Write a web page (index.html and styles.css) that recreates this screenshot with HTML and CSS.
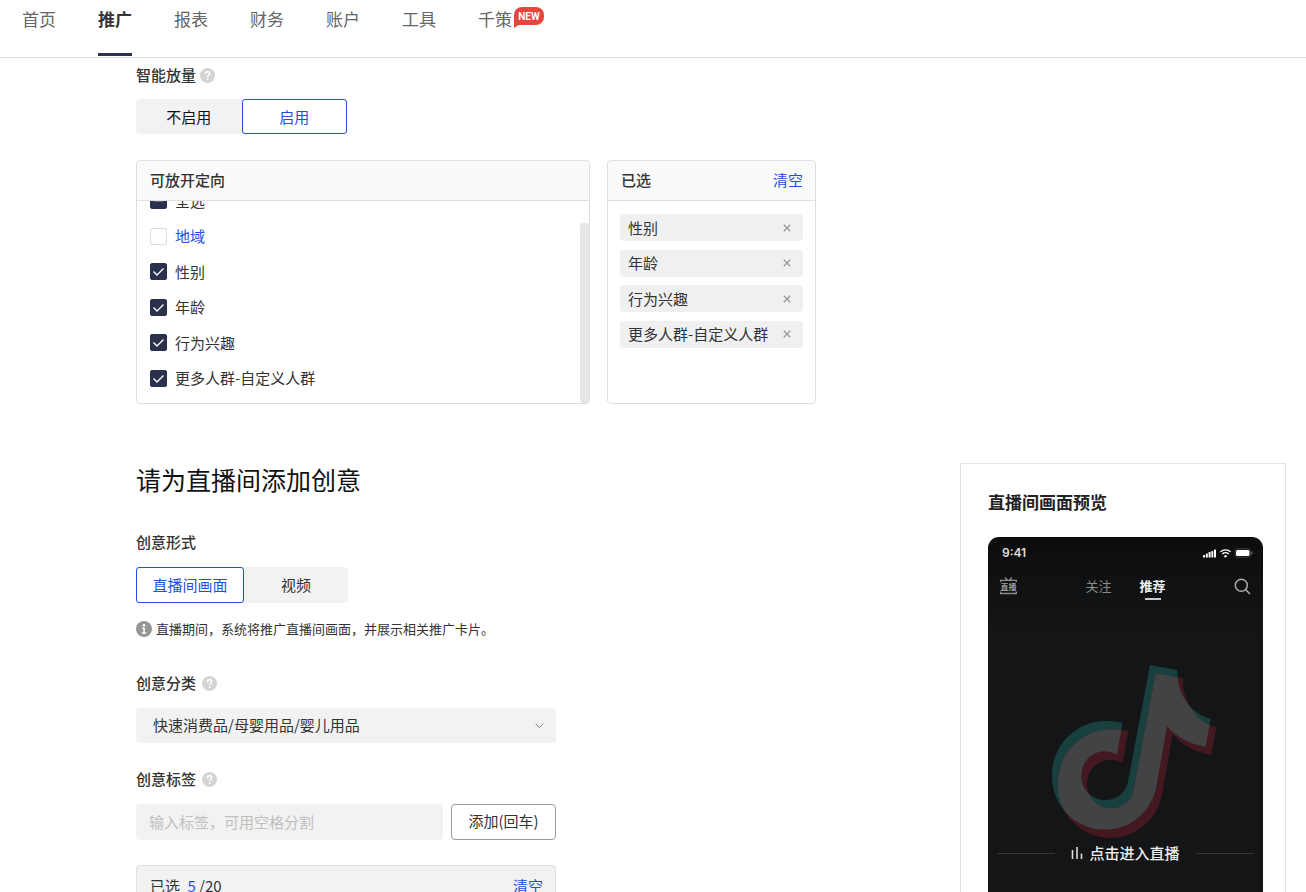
FILE: index.html
```html
<!DOCTYPE html>
<html lang="zh-CN">
<head>
<meta charset="utf-8">
<meta name="viewport" content="width=device-width, initial-scale=1">
<title>推广</title>
<link rel="stylesheet" href="styles.css">
</head>
<body>
<svg class="defs" aria-hidden="true">
  <symbol id="help" viewBox="0 0 15 15"><circle cx="7.500" cy="7.500" r="7.500" fill="#d4d4d4"/><path d="M5.300 5.900C5.300 4.500 6.200 3.700 7.500 3.700S9.700 4.500 9.700 5.700C9.700 7 7.600 7.300 7.600 9" fill="none" stroke="#fff" stroke-width="1.500"/><circle cx="7.600" cy="11" r="1" fill="#fff"/></symbol>
  <symbol id="tick" viewBox="0 0 17 17"><path d="M3.500 8.500l3.500 3.500 6.500-6.500" fill="none" stroke="#fff" stroke-width="1.400"/></symbol>
  <symbol id="close" viewBox="0 0 8 8"><path d="M.8.8l6.400 6.400M7.200.8L.8 7.200" fill="none" stroke="#999" stroke-width="1.300"/></symbol>
</svg>
<header class="topbar">
  <nav class="nav">
    <a href="#">首页</a>
    <a href="#" class="active">推广</a>
    <a href="#">报表</a>
    <a href="#">财务</a>
    <a href="#">账户</a>
    <a href="#">工具</a>
    <a href="#">千策<span class="badge">NEW</span></a>
  </nav>
</header>
<main class="content">
  <section class="targeting">
    <h3 class="label">智能放量 <svg class="help"><use href="#help"/></svg></h3>
    <div class="segment">
      <button type="button" class="seg plain">不启用</button>
      <button type="button" class="seg selected">启用</button>
    </div>
    <div class="panels">
      <div class="panel">
        <div class="panel-head"><b>可放开定向</b></div>
        <div class="options">
          <div class="option-list">
            <label class="option"><span class="check"><input type="checkbox" checked><svg viewBox="0 0 17 17"><path d="M4 8.500h9" stroke="#fff" stroke-width="1.500"/></svg></span>全选</label>
            <label class="option link"><span class="check"><input type="checkbox"></span>地域</label>
            <label class="option"><span class="check"><input type="checkbox" checked><svg><use href="#tick"/></svg></span>性别</label>
            <label class="option"><span class="check"><input type="checkbox" checked><svg><use href="#tick"/></svg></span>年龄</label>
            <label class="option"><span class="check"><input type="checkbox" checked><svg><use href="#tick"/></svg></span>行为兴趣</label>
            <label class="option"><span class="check"><input type="checkbox" checked><svg><use href="#tick"/></svg></span>更多人群-自定义人群</label>
          </div>
          <div class="scroll-thumb"></div>
        </div>
      </div>
      <div class="panel">
        <div class="panel-head narrow"><b>已选</b><button type="button" class="clear">清空</button></div>
        <div class="tags">
          <div class="tag">性别<button type="button" aria-label="移除性别"><svg><use href="#close"/></svg></button></div>
          <div class="tag">年龄<button type="button" aria-label="移除年龄"><svg><use href="#close"/></svg></button></div>
          <div class="tag">行为兴趣<button type="button" aria-label="移除行为兴趣"><svg><use href="#close"/></svg></button></div>
          <div class="tag">更多人群-自定义人群<button type="button" aria-label="移除更多人群"><svg><use href="#close"/></svg></button></div>
        </div>
      </div>
    </div>
  </section>
  <div class="creative">
    <section class="form">
      <h2 class="title">请为直播间添加创意</h2>
      <h3 class="label">创意形式</h3>
      <div class="segment">
        <button type="button" class="seg selected">直播间画面</button>
        <button type="button" class="seg">视频</button>
      </div>
      <p class="note"><svg viewBox="0 0 15 15"><circle cx="7.500" cy="7.500" r="7.500" fill="#969696"/><circle cx="7.500" cy="4" r="1.200" fill="#fff"/><path d="M5.800 6.700h1.800v4.300M5.500 11.200h4" fill="none" stroke="#fff" stroke-width="1.400"/></svg>直播期间，系统将推广直播间画面，并展示相关推广卡片。</p>
      <label class="label" for="category">创意分类 <svg class="help"><use href="#help"/></svg></label>
      <div class="select">
        <select id="category"><option>快速消费品/母婴用品/婴儿用品</option></select>
        <svg viewBox="0 0 9 6"><path d="M.7.7l3.800 4 3.800-4" fill="none" stroke="#888"/></svg>
      </div>
      <label class="label second" for="tag">创意标签 <svg class="help"><use href="#help"/></svg></label>
      <div class="tag-entry">
        <input id="tag" type="text" placeholder="输入标签，可用空格分割">
        <button type="button">添加(回车)</button>
      </div>
      <div class="chosen"><span>已选 <em>5</em> /20</span><button type="button" class="clear">清空</button></div>
    </section>
    <aside class="preview">
      <h3>直播间画面预览</h3>
      <div class="phone">
        <div class="status">
          <span>9:41</span>
          <svg viewBox="0 0 50 10" aria-hidden="true">
            <g fill="#fff"><rect x="0" y="7" width="2" height="2.500" rx=".5"/><rect x="2.800" y="5.500" width="2" height="4" rx=".5"/><rect x="5.600" y="4" width="2" height="5.500" rx=".5"/><rect x="8.400" y="3" width="1.800" height="6.500" rx=".5"/><rect x="11" y="1.500" width="2" height="8" rx=".5"/><circle cx="22.500" cy="8.300" r="1.200"/><rect x="33" y="2" width="13.500" height="6" rx="1.500"/></g>
            <g fill="none" stroke="#fff" stroke-width="1.300"><path d="M17.300 3.900a7.500 7.500 0 0 1 10.400 0M19.300 6a4.600 4.600 0 0 1 6.400 0"/></g>
            <rect x="31.800" y=".8" width="15.800" height="8.400" rx="2.400" fill="none" stroke="#555" stroke-width=".7"/><path d="M48.900 3.500v3" stroke="#777"/>
          </svg>
        </div>
        <div class="phone-nav">
          <span class="live"><span>直播</span><svg viewBox="0 0 17 18"><path d="M.7 5V3.400h15.600V5M.7 14.500v2h15.600v-2M5 .5l2.500 2.700M12 .5L9.500 3.200" fill="none" stroke="#8b8c8c" stroke-width="1.400"/></svg></span>
          <div class="phone-tabs"><span>关注</span><span class="current">推荐</span></div>
          <svg class="search" viewBox="0 0 17 17"><circle cx="7.300" cy="7.300" r="6" fill="none" stroke="#aaa" stroke-width="1.500"/><path d="M11.600 11.600l4.400 4.400" stroke="#aaa" stroke-width="1.500"/></svg>
        </div>
        <svg class="logo" viewBox="24 75 825 520" aria-hidden="true">
          <defs>
            <path id="note" d="M510 75L592 90C590 165 635 222 692 237L677 320C630 312 590 292 561 258L530 435C518 512 452 569 376 569C285 569 216 497 216 407C216 315 288 243 378 243C395 243 412 245 428 248L411 343C399 337 387 334 375 334C334 334 304 367 304 407C304 448 335 480 376 480C410 480 438 457 444 425Z"/>
            <clipPath id="overlap"><use href="#note"/></clipPath>
          </defs>
          <use href="#note" fill="#18403f"/>
          <use href="#note" x="17" y="25" fill="#431820"/>
          <g clip-path="url(#overlap)"><use href="#note" x="17" y="25" fill="#424344"/></g>
        </svg>
        <div class="enter"><i></i><span><svg viewBox="0 0 12 12"><path d="M1.500 3v9M6 0v12M10.500 6.500v5.500" stroke="#ddd" stroke-width="1.600"/></svg>点击进入直播</span><i></i></div>
      </div>
    </aside>
  </div>
</main>
</body>
</html>
```
FILE: styles.css
```css
* { box-sizing: border-box; }

body {
  margin: 0;
  height: 100vh;
  overflow: hidden;
  background: #fff;
  color: #333;
  font: 15px/20px "Noto Sans CJK SC", sans-serif;
}

h2, h3, p { margin: 0; }
button, input, select { font: inherit; color: inherit; margin: 0; }
button { cursor: pointer; }
.defs { display: none; }

.topbar {
  height: 58px;
  border-bottom: 1px solid #e2e2e2;
  padding-left: 22px;
}

.nav { display: flex; gap: 42px; }

.nav a {
  position: relative;
  height: 56px;
  padding-top: 7px;
  border-bottom: 3px solid transparent;
  color: #666;
  font-size: 17px;
  line-height: 24px;
  text-decoration: none;
}

.nav .active { color: #333; font-weight: 700; border-color: #2a314d; }

.badge {
  position: absolute;
  left: 36px;
  top: 7px;
  width: 30px;
  height: 18px;
  border-radius: 8px 8px 8px 0;
  background: #e5453d;
  color: #fff;
  font: 700 10px/19px Roboto, sans-serif;
  text-align: center;
}

.badge::after {
  content: "";
  position: absolute;
  left: 0;
  top: 17px;
  border-top: 4px solid #e5453d;
  border-right: 6px solid transparent;
}

.content { padding: 7px 20px 0 136px; }

.label {
  display: flex;
  align-items: center;
  gap: 4px;
  font-size: 15px;
  line-height: 20px;
  font-weight: 500;
}

.help { width: 15px; height: 15px; }

.segment {
  display: flex;
  width: 212px;
  margin-top: 14px;
  border-radius: 4px;
  background: #f2f2f2;
}

.seg {
  flex: 1 0 auto;
  min-width: 104px;
  height: 35px;
  padding: 0 15px;
  border: 1px solid transparent;
  border-radius: 3px;
  background: none;
}

.targeting .segment { width: 211px; }
.targeting .seg { flex: 1 0 0; }
.seg.plain { color: #111; }
.seg.selected { border-color: #1e4fe0; background: #fff; color: #1e4fe0; }

.panels {
  display: grid;
  grid-template-columns: 454px 209px;
  gap: 17px;
  margin-top: 26px;
}

.panel {
  height: 244px;
  display: flex;
  flex-direction: column;
  border: 1px solid #dfdfdf;
  border-radius: 4px;
}

.panel-head {
  display: flex;
  justify-content: space-between;
  padding: 9px 13px 10px;
  border-bottom: 1px solid #dfdfdf;
  border-radius: 4px 4px 0 0;
  background: #fafafa;
}

.panel-head.narrow { padding-right: 12px; }
.panel-head b { font-weight: 500; }

.clear { padding: 0; border: 0; background: none; color: #1e4fe0; }

.options {
  position: relative;
  flex: 1;
  min-height: 0;
  display: flex;
  flex-direction: column;
  justify-content: flex-end;
  padding: 0 13px 7px;
  overflow: hidden;
}

.option-list {
  flex: none;
  display: grid;
  grid-auto-rows: 1fr;
  height: 213px;
}

.option { display: flex; align-items: center; gap: 8px; }
.option.link { color: #1e4fe0; }

.check { display: grid; width: 17px; height: 17px; }
.check > * { grid-area: 1 / 1; width: 17px; height: 17px; }
.check svg { pointer-events: none; z-index: 1; }

.check input {
  appearance: none;
  border: 1px solid #dcdcdc;
  border-radius: 2px;
  background: #fff;
}

.check input:checked { border-color: #2a314d; background: #2a314d; }

.scroll-thumb {
  position: absolute;
  top: 22px;
  right: 0;
  bottom: 0;
  width: 9px;
  border-radius: 4px;
  background: #e6e6e6;
}

.tags {
  display: grid;
  align-content: space-between;
  height: 134px;
  margin: 13px 12px 0;
}

.tag {
  display: flex;
  align-items: center;
  justify-content: space-between;
  height: 27px;
  padding: 0 12px 0 8px;
  border-radius: 4px;
  background: #f0f0f0;
  white-space: nowrap;
}

.tag button { display: flex; padding: 0; border: 0; background: none; }
.tag svg { width: 8px; height: 8px; }

.creative {
  display: flex;
  align-items: flex-start;
  justify-content: space-between;
  margin-top: 59px;
}

.form { width: 420px; }
.title { margin-bottom: 37px; color: #111; font-size: 25px; line-height: 32px; font-weight: 400; }
.form .label { gap: 6px; }
.form .segment { margin-top: 15px; }
.form .seg { height: 36px; }

.note {
  display: flex;
  align-items: center;
  gap: 4px;
  margin: 16px 0 34px;
  font-size: 13px;
  white-space: nowrap;
}

.note svg { flex: none; width: 16px; height: 16px; }

.select { display: grid; align-items: center; margin-top: 15px; }
.select > * { grid-area: 1 / 1; }

.select select {
  appearance: none;
  width: 100%;
  height: 35px;
  padding: 0 17px 2px;
  border: 0;
  border-radius: 4px;
  background: #f2f2f2;
}

.select svg { justify-self: end; width: 9px; height: 6px; margin-right: 12px; pointer-events: none; }

.form .second { margin-top: 26px; }

.tag-entry { display: flex; gap: 8px; margin-top: 15px; }

.tag-entry input {
  flex: 1;
  min-width: 0;
  height: 36px;
  padding: 0 13px 2px;
  border: 0;
  border-radius: 4px;
  background: #f2f2f2;
}

.tag-entry input::placeholder { color: #bfbfbf; }

.tag-entry button {
  width: 105px;
  padding: 0 0 2px;
  border: 1px solid #999;
  border-radius: 4px;
  background: #fff;
}

.chosen {
  display: flex;
  justify-content: space-between;
  margin-top: 25px;
  padding: 10px 12px 10px 13px;
  border: 1px solid #dfdfdf;
  border-radius: 4px 4px 0 0;
  background: #f2f2f2;
}

.chosen em { margin-left: 4px; color: #1e4fe0; font-style: normal; }

.preview { width: 326px; padding: 26px 22px 26px 27px; border: 1px solid #e3e3e3; }
.preview h3 { margin-bottom: 23px; color: #222; font-size: 17px; line-height: 24px; font-weight: 700; }

.phone {
  width: 275px;
  padding-bottom: 80px;
  border-radius: 11px;
  background: linear-gradient(#0c0d0e, #131516 100px);
  color: #fff;
}

.status { display: flex; align-items: center; justify-content: space-between; padding: 6px 10px 0 14px; color: #ddd; font: 600 12px/20px Inter, sans-serif; }
.status svg { width: 50px; height: 10px; }

.phone-nav {
  display: flex;
  align-items: center;
  justify-content: space-between;
  padding: 10px 12px 0;
}

.live { display: grid; width: 17px; height: 18px; color: #999; font-size: 8px; line-height: 19px; font-weight: 700; text-align: center; }
.live > * { grid-area: 1 / 1; }

.phone-tabs { display: flex; gap: 28px; color: #8b8c8c; font-size: 13px; line-height: 26px; }
.phone-tabs .current { position: relative; color: #eee; font-weight: 700; }

.current::after {
  content: "";
  position: absolute;
  left: 5px;
  right: 5px;
  bottom: -1px;
  height: 2px;
  background: #ccc;
}

.search { width: 17px; height: 17px; }
.logo { display: block; width: 100%; margin-top: 66px; }

.enter {
  display: flex;
  align-items: center;
  justify-content: space-between;
  margin-top: 5px;
  padding: 0 9px;
  color: #eee;
  font-weight: 500;
}

.enter i { width: 58px; height: 1px; background: #333536; }
.enter span { display: flex; align-items: center; gap: 6px; }
.enter svg { width: 12px; height: 12px; }
```
